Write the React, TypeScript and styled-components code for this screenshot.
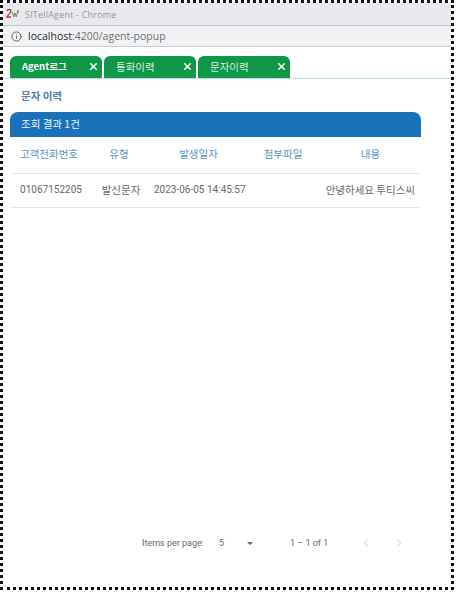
import React from "react";
import styled, { createGlobalStyle } from "styled-components";
import { ChevronLeft, ChevronRight, Info, X } from "lucide-react";

const GlobalStyle = createGlobalStyle`
  html, body {
    margin: 0;
    padding: 0;
    background: #fff;
  }
  body {
    font-family: "Noto Sans CJK KR", "Liberation Sans", sans-serif;
  }
`;

const PopupFrame = styled.div`
  box-sizing: border-box;
  width: 454px;
  height: 590px;
  border: 3px dotted #111;
  display: flex;
  flex-direction: column;
  background: #fff;
  overflow: hidden;
`;

const TitleBar = styled.div`
  height: 22px;
  flex: none;
  display: flex;
  align-items: center;
  gap: 4px;
  padding-left: 3px;
  background: #e8e9ed;
  border-bottom: 1px solid #c6c7cb;
`;

const TitleText = styled.span`
  font-family: "Open Sans", sans-serif;
  font-size: 9px;
  color: #96989c;
  letter-spacing: 0.2px;
`;

const AddressBar = styled.div`
  height: 20px;
  flex: none;
  display: flex;
  align-items: center;
  gap: 6px;
  padding-left: 8px;
  background: #f1f2f4;
  border-bottom: 1px solid #c9cacd;
  color: #55585c;
`;

const AddressText = styled.span`
  font-family: "Open Sans", sans-serif;
  font-size: 10.5px;
  color: #6c6f73;

  b {
    font-weight: 400;
    color: #26282b;
  }
`;

const Content = styled.div`
  flex: 1;
  display: flex;
  flex-direction: column;
  padding-top: 9px;
`;

const TabStrip = styled.div`
  display: flex;
  gap: 2px;
  height: 22px;
  flex: none;
  padding-left: 7px;
  border-bottom: 1px solid #b9dcef;
`;

const Tab = styled.div`
  box-sizing: border-box;
  width: 92px;
  height: 22px;
  display: flex;
  align-items: center;
  justify-content: space-between;
  padding: 0 3px 2px 12px;
  background: #0f9748;
  border-radius: 6px 6px 0 0;
  color: #fff;
`;

const TabLabel = styled.span<{ $active?: boolean }>`
  font-size: ${(props) => (props.$active ? "9.5px" : "10.5px")};
  font-weight: ${(props) => (props.$active ? 700 : 400)};
  color: ${(props) => (props.$active ? "#fff" : "#d9efe2")};
`;

const SectionTitle = styled.h2`
  margin: 9px 0 9px 18px;
  height: 15px;
  line-height: 15px;
  font-size: 10.5px;
  font-weight: 700;
  color: #4c82b6;
`;

const ResultBar = styled.div`
  box-sizing: border-box;
  width: 411px;
  height: 25px;
  margin-left: 7px;
  padding: 0 0 2px 11px;
  display: flex;
  align-items: center;
  background: #1a72bb;
  border-radius: 8px 8px 0 0;
  font-size: 10.5px;
  color: #e8f2fa;
`;

const TableBlock = styled.div`
  width: 410px;
  margin-left: 7px;
`;

const Row = styled.div<{ $header?: boolean }>`
  box-sizing: border-box;
  height: ${(props) => (props.$header ? "37px" : "34px")};
  padding-bottom: 3px;
  display: grid;
  grid-template-columns: 78px 64px 93px 76px 1fr;
  align-items: center;
  border-bottom: 1px solid #e7e7e7;
  font-size: 10.5px;
  color: ${(props) => (props.$header ? "#5a94c4" : "#66696c")};
`;

const Cell = styled.div<{ $align?: string; $inset?: string }>`
  text-align: ${(props) => props.$align || "center"};
  padding: ${(props) => props.$inset || "0"};
  white-space: nowrap;
`;

const NumberCell = styled(Cell)`
  font-family: "Roboto", sans-serif;
  font-size: 10px;
`;

const Spacer = styled.div`
  flex: 1;
`;

const Paginator = styled.div`
  height: 26px;
  flex: none;
  margin-bottom: 31px;
  display: flex;
  align-items: center;
  padding-left: 139px;
  font-family: "Roboto", sans-serif;
  font-size: 9px;
  color: #66696c;
`;

const PageSize = styled.span`
  margin-left: 15px;
  width: 28px;
`;

const SelectArrow = styled.span`
  width: 0;
  height: 0;
  border-left: 3.5px solid transparent;
  border-right: 3.5px solid transparent;
  border-top: 3.5px solid #66696c;
`;

const RangeLabel = styled.span`
  margin-left: 37px;
  width: 69px;
`;

const PageButtons = styled.div`
  display: flex;
  gap: 19px;
  color: #dfe0e2;
`;

function AppLogo() {
  return (
    <svg width="15" height="12" viewBox="0 0 15 12">
      <path d="M1 3c1-2 4-2 4 0 0 2-3 3-4 6h4" fill="none" stroke="#c2323a" strokeWidth="1.3" />
      <path d="M6.5 4l1.2 5L9 5l1.2 4L12 3" fill="none" stroke="#5a9a58" strokeWidth="1" />
      <path d="M11.5 2l1 2.5" fill="none" stroke="#c2323a" strokeWidth="0.9" />
    </svg>
  );
}

const tabs = [
  { label: "Agent로그", active: true },
  { label: "통화이력", active: false },
  { label: "문자이력", active: false },
];

export default function App() {
  return (
    <PopupFrame>
      <GlobalStyle />
      <TitleBar>
        <AppLogo />
        <TitleText>SITellAgent - Chrome</TitleText>
      </TitleBar>
      <AddressBar>
        <Info size={11} strokeWidth={2} />
        <AddressText>
          <b>localhost</b>:4200/agent-popup
        </AddressText>
      </AddressBar>
      <Content>
        <TabStrip>
          {tabs.map((tab) => (
            <Tab key={tab.label}>
              <TabLabel $active={tab.active}>{tab.label}</TabLabel>
              <X size={11} strokeWidth={3.5} color="#fff" />
            </Tab>
          ))}
        </TabStrip>
        <SectionTitle>문자 이력</SectionTitle>
        <ResultBar>조회 결과 1건</ResultBar>
        <TableBlock>
          <Row $header>
            <Cell>고객전화번호</Cell>
            <Cell $inset="0 2px 0 0">유형</Cell>
            <Cell>발생일자</Cell>
            <Cell>첨부파일</Cell>
            <Cell>내용</Cell>
          </Row>
          <Row>
            <NumberCell $inset="0 0 0 4px">01067152205</NumberCell>
            <Cell $inset="0 0 0 2px">발신문자</Cell>
            <NumberCell $inset="0 0 0 2px">2023-06-05 14:45:57</NumberCell>
            <Cell />
            <Cell $align="right" $inset="0 5px 0 0">안녕하세요 투티스씨</Cell>
          </Row>
        </TableBlock>
        <Spacer />
        <Paginator>
          <span>Items per page:</span>
          <PageSize>5</PageSize>
          <SelectArrow />
          <RangeLabel>1 – 1 of 1</RangeLabel>
          <PageButtons>
            <ChevronLeft size={14} />
            <ChevronRight size={14} />
          </PageButtons>
        </Paginator>
      </Content>
    </PopupFrame>
  );
}
